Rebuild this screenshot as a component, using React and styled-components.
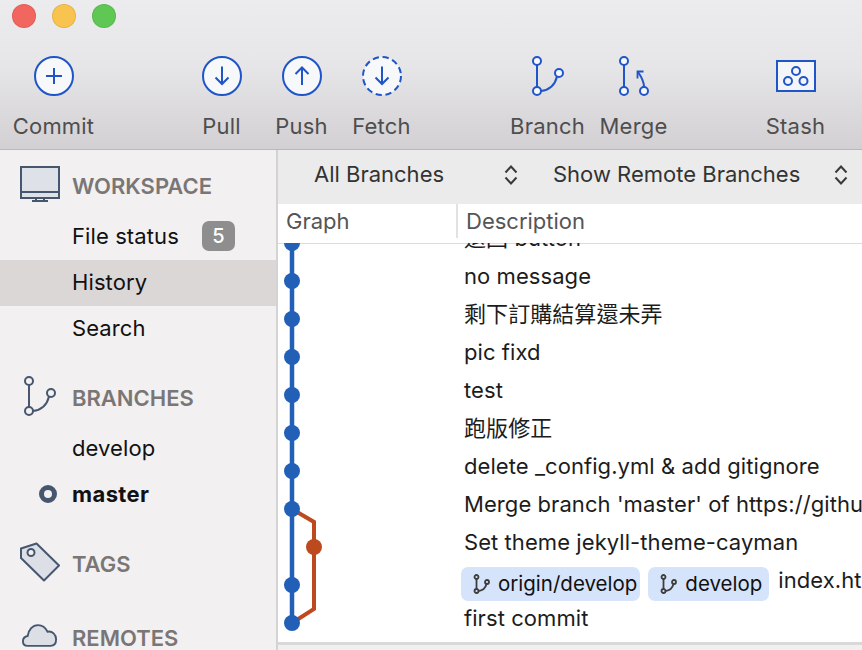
import React from "react";
import styled, { createGlobalStyle } from "styled-components";

const GlobalStyle = createGlobalStyle`
  html, body {
    margin: 0;
    padding: 0;
    height: 100%;
    overflow: hidden;
    background: #f0f0f0;
  }
  #root {
    height: 100%;
  }
  * {
    box-sizing: border-box;
  }
`;

const FONT = `Inter, "Noto Sans CJK TC", "Noto Sans", sans-serif`;
const BLUE = "#1f55c8";
const SLATE = "#47566f";

const Window = styled.div`
  width: 862px;
  height: 650px;
  display: flex;
  flex-direction: column;
  overflow: hidden;
  font-family: ${FONT};
`;

const TitleArea = styled.header`
  flex: 0 0 150px;
  background: linear-gradient(#ecebed, #e6e5e8 45%, #d2d0d3);
  border-bottom: 1px solid #b9b8ba;
`;

const Lights = styled.div`
  display: flex;
  gap: 16px;
  padding: 4px 0 0 12px;
  height: 56px;
`;

const Light = styled.span`
  width: 24px;
  height: 24px;
  border-radius: 50%;
  background: ${({ $color }) => $color};
  border: 1px solid rgba(0, 0, 0, 0.08);
`;

const Toolbar = styled.div`
  display: flex;
  padding-left: 14px;
`;

const ToolButton = styled.div`
  flex: 0 0 ${({ $width }) => $width || 80}px;
  min-width: 0;
  margin-left: ${({ $gap }) => $gap || 0}px;
  display: flex;
  flex-direction: column;
  align-items: center;
  gap: 15px;
  color: #4e4e4e;
  font-size: 22px;
  line-height: 30px;
  letter-spacing: 0.2px;
  svg {
    display: block;
  }
`;

const Label = styled.span`
  margin-left: -1px;
  white-space: nowrap;
`;

const Body = styled.div`
  flex: 1;
  display: flex;
  min-height: 0;
`;

const Sidebar = styled.nav`
  flex: 0 0 278px;
  background: #f2f0f1;
  border-right: 2px solid #d4d3d3;
  padding-top: 13px;
`;

const SectionHeader = styled.div`
  display: flex;
  align-items: center;
  height: 46px;
  margin-top: ${({ $top }) => $top || 0}px;
  margin-bottom: 4px;
  color: #7a7676;
  font-size: 22px;
  font-weight: 600;
`;

const SectionIcon = styled.span`
  flex: 0 0 72px;
  display: flex;
  padding-left: ${({ $left }) => $left || 20}px;
  padding-bottom: ${({ $lift }) => $lift || 0}px;
  svg {
    display: block;
  }
`;

const Item = styled.div`
  display: flex;
  align-items: center;
  height: 46px;
  padding-left: 72px;
  color: #111;
  font-size: 22px;
  letter-spacing: ${({ $bold }) => ($bold ? 0.4 : 0.1)}px;
  font-weight: ${({ $bold }) => ($bold ? 700 : 400)};
  position: relative;
`;

const SelectedItem = styled(Item)`
  margin: 1px 0 -1px;
  padding-bottom: 2px;
  background: #dcd7d7;
`;

const Badge = styled.span`
  margin-left: 23px;
  width: 33px;
  height: 30px;
  border-radius: 7px;
  background: #8e8e8e;
  color: #fff;
  font-size: 20px;
  font-weight: 500;
  display: flex;
  align-items: center;
  justify-content: center;
`;

const CurrentDot = styled.span`
  position: absolute;
  left: 39px;
  top: 14px;
  width: 18px;
  height: 18px;
  border-radius: 50%;
  border: 5px solid ${SLATE};
`;

const Main = styled.main`
  flex: 1;
  min-width: 0;
  display: flex;
  flex-direction: column;
  background: #f0f0f0;
`;

const FilterBar = styled.div`
  flex: 0 0 54px;
  display: flex;
  align-items: center;
  padding: 0 0 6px 36px;
  gap: 35px;
  background: #ebebeb;
  color: #333;
  font-size: 22px;
`;

const Select = styled.div`
  flex: 0 0 ${({ $width }) => $width}px;
  display: flex;
  align-items: center;
  justify-content: space-between;
  white-space: nowrap;
  svg {
    margin-top: 2px;
  }
`;

const ListHeader = styled.div`
  flex: 0 0 39px;
  display: flex;
  background: #fff;
  color: #555;
  font-size: 22px;
`;

const HeaderCell = styled.div`
  flex: 0 0 ${({ $width }) => $width || "auto"};
  height: 34px;
  display: flex;
  align-items: center;
  padding-left: ${({ $pad }) => $pad}px;
  border-left: ${({ $divider }) => ($divider ? "2px solid #e2e2e2" : "none")};
`;

const List = styled.div`
  flex: 0 0 402px;
  display: flex;
  background: #fff;
  overflow: hidden;
  border-bottom: 3px solid #d9d9d9;
  box-shadow: inset 0 1px 0 #dcdcdc;
`;

const GraphColumn = styled.div`
  flex: 0 0 179px;
  svg {
    display: block;
  }
`;

const Rows = styled.div`
  flex: 1;
  min-width: 0;
  margin-top: -19px;
`;

const Row = styled.div`
  display: flex;
  align-items: center;
  height: 38px;
  padding: 0 0 10px 7px;
  color: #1c1c1c;
  font-size: 22px;
  line-height: 28px;
  letter-spacing: 0.07px;
  white-space: nowrap;
`;

const Chip = styled.span`
  display: flex;
  align-items: center;
  align-self: flex-start;
  gap: 8px;
  height: 34px;
  margin: 1px ${({ $first }) => ($first ? 8 : 9)}px 0 ${({ $first }) => ($first ? -3 : 0)}px;
  padding: 0 ${({ $first }) => ($first ? 3 : 7)}px 0 12px;
  border-radius: 7px;
  background: #d6e4fb;
  color: #111;
  font-size: 20.5px;
  letter-spacing: 0;
`;

const Circle = ({ dashed, children }) => (
  <svg width="40" height="40" viewBox="0 0 40 40">
    <circle
      cx="20"
      cy="20"
      r="19"
      fill="#f7f8fa"
      stroke={BLUE}
      strokeWidth="2"
      strokeDasharray={dashed ? "6.2 3.75" : undefined}
    />
    <g fill="none" stroke={BLUE} strokeWidth="2">
      {children}
    </g>
  </svg>
);

const ArrowDown = () => (
  <>
    <path d="M20 10.5V28" />
    <path d="M13.5 21.5L20 28l6.5-6.5" />
  </>
);

const BranchGlyph = ({ color, fill }) => (
  <svg width="32" height="40" viewBox="0 0 32 40" fill="none" stroke={color} strokeWidth="2">
    <circle cx="5" cy="5" r="4" fill={fill} />
    <circle cx="5" cy="35" r="4" fill={fill} />
    <circle cx="27" cy="17" r="4" fill={fill} />
    <path d="M5 9v22" />
    <path d="M9 35c8-1 14-6 16-14.500" />
  </svg>
);

const MergeGlyph = () => (
  <svg width="32" height="40" viewBox="0 0 32 40" fill="none" stroke={BLUE} strokeWidth="2">
    <circle cx="6" cy="5" r="4" fill="#f7f8fa" />
    <circle cx="6" cy="35" r="4" fill="#f7f8fa" />
    <circle cx="26" cy="35" r="4" fill="#f7f8fa" />
    <path d="M6 9v22" />
    <path d="M26 31c0-5-2.500-10-6-15" />
    <path d="M19.500 22.500v-7h6" strokeWidth="1.800" />
  </svg>
);

const StashGlyph = () => (
  <svg width="40" height="40" viewBox="0 0 40 40" fill="none" stroke={BLUE} strokeWidth="2">
    <rect x="1" y="5" width="38" height="30" fill="#f4f5f8" />
    <circle cx="20" cy="15" r="4" />
    <circle cx="12" cy="25" r="4" />
    <circle cx="27.500" cy="25" r="4" />
  </svg>
);

const MonitorIcon = () => (
  <svg width="40" height="36" viewBox="0 0 40 36" fill="none" stroke={SLATE} strokeWidth="2">
    <rect x="1" y="1" width="38" height="31" fill="#dfe1e8" />
    <path d="M1 26h38M16 32v3M24 32v3M12 35h16" />
  </svg>
);

const TagIcon = () => (
  <svg width="40" height="40" viewBox="0 0 40 40" fill="#dcdfe6" stroke={SLATE} strokeWidth="2" strokeLinejoin="round">
    <path d="M1 6.500L16.500 1.500 39 23.500 24 38.500 1 16z" />
    <circle cx="11" cy="10.500" r="3.500" fill="#f2f0f1" />
  </svg>
);

const CloudIcon = () => (
  <svg width="36" height="23" viewBox="0 0 38 24" fill="#dcdfe6" stroke={SLATE} strokeWidth="2">
    <path d="M6 23C2 23 1 20 1 18c0-3 2-5 5-5.500C7 6 11 1 17 1c5 0 8 3 10 7 5-1 9 3 9 8 0 4-2 7-6 7z" />
  </svg>
);

const Chevrons = () => (
  <svg width="14" height="20" viewBox="0 0 14 20" fill="none" stroke="#3a3a3a" strokeWidth="2">
    <path d="M1.500 7.500L7 1.500l5.500 6M1.500 12.500L7 18.500l5.500-6" />
  </svg>
);

const ChipBranch = () => (
  <svg width="17" height="20" viewBox="0 0 17 20" fill="none" stroke="#3d3d3d" strokeWidth="1.800">
    <circle cx="3.500" cy="3" r="2" />
    <circle cx="3.500" cy="17" r="2" />
    <circle cx="14" cy="8" r="2" />
    <path d="M3.500 5v10M5.500 17c4-.5 7-3 8-7" />
  </svg>
);

const dots = [0, 38, 76, 114, 152, 190, 228, 266, 342, 380];

const CommitGraph = () => (
  <svg width="179" height="399" viewBox="0 0 179 399" fill="none">
    <path d="M14 0V380" stroke="#2260b8" strokeWidth="4.500" />
    <path d="M14 266L36 279V366L14 380" stroke="#bd4a1f" strokeWidth="4" />
    {dots.map((y) => (
      <circle key={y} cx="14" cy={y} r="8" fill="#2260b8" />
    ))}
    <circle cx="36" cy="304" r="8" fill="#bd4a1f" />
  </svg>
);

const messages = [
  "退回 button",
  "no message",
  "剩下訂購結算還未弄",
  "pic fixd",
  "test",
  "跑版修正",
  "delete _config.yml & add gitignore",
  "Merge branch 'master' of https://github.com/user/repo",
  "Set theme jekyll-theme-cayman",
];

export default function App() {
  return (
    <Window>
      <GlobalStyle />
      <TitleArea>
        <Lights>
          <Light $color="#f1665e" />
          <Light $color="#f8c34f" />
          <Light $color="#5fc854" />
        </Lights>
        <Toolbar>
          <ToolButton>
            <Circle>
              <path d="M12 20h16M20 12v16" />
            </Circle>
            <Label>Commit</Label>
          </ToolButton>
          <ToolButton $gap={88}>
            <Circle>
              <ArrowDown />
            </Circle>
            <Label>Pull</Label>
          </ToolButton>
          <ToolButton>
            <Circle>
              <path d="M20 29V11.500" />
              <path d="M13.500 18L20 11.500l6.500 6.500" />
            </Circle>
            <Label>Push</Label>
          </ToolButton>
          <ToolButton>
            <Circle dashed>
              <ArrowDown />
            </Circle>
            <Label>Fetch</Label>
          </ToolButton>
          <ToolButton $gap={83} $width={86}>
            <BranchGlyph color={BLUE} fill="#f7f8fa" />
            <Label>Branch</Label>
          </ToolButton>
          <ToolButton $width={86}>
            <MergeGlyph />
            <Label>Merge</Label>
          </ToolButton>
          <ToolButton $gap={79}>
            <StashGlyph />
            <Label>Stash</Label>
          </ToolButton>
        </Toolbar>
      </TitleArea>
      <Body>
        <Sidebar>
          <SectionHeader>
            <SectionIcon $lift={4}>
              <MonitorIcon />
            </SectionIcon>
            WORKSPACE
          </SectionHeader>
          <Item>
            File status
            <Badge>5</Badge>
          </Item>
          <SelectedItem>History</SelectedItem>
          <Item>Search</Item>
          <SectionHeader $top={24}>
            <SectionIcon $left={24} $lift={4}>
              <BranchGlyph color={SLATE} fill="#f2f0f1" />
            </SectionIcon>
            BRANCHES
          </SectionHeader>
          <Item>develop</Item>
          <Item $bold>
            <CurrentDot />
            master
          </Item>
          <SectionHeader $top={24}>
            <SectionIcon $lift={4}>
              <TagIcon />
            </SectionIcon>
            TAGS
          </SectionHeader>
          <SectionHeader $top={28}>
            <SectionIcon $left={22} $lift={6}>
              <CloudIcon />
            </SectionIcon>
            REMOTES
          </SectionHeader>
        </Sidebar>
        <Main>
          <FilterBar>
            <Select $width={204}>
              All Branches
              <Chevrons />
            </Select>
            <Select $width={295}>
              Show Remote Branches
              <Chevrons />
            </Select>
          </FilterBar>
          <ListHeader>
            <HeaderCell $width="178px" $pad={8}>
              Graph
            </HeaderCell>
            <HeaderCell $divider $pad={8}>
              Description
            </HeaderCell>
          </ListHeader>
          <List>
            <GraphColumn>
              <CommitGraph />
            </GraphColumn>
            <Rows>
              {messages.map((text) => (
                <Row key={text}>{text}</Row>
              ))}
              <Row>
                <Chip $first>
                  <ChipBranch />
                  origin/develop
                </Chip>
                <Chip>
                  <ChipBranch />
                  develop
                </Chip>
                index.html
              </Row>
              <Row>first commit</Row>
            </Rows>
          </List>
        </Main>
      </Body>
    </Window>
  );
}
